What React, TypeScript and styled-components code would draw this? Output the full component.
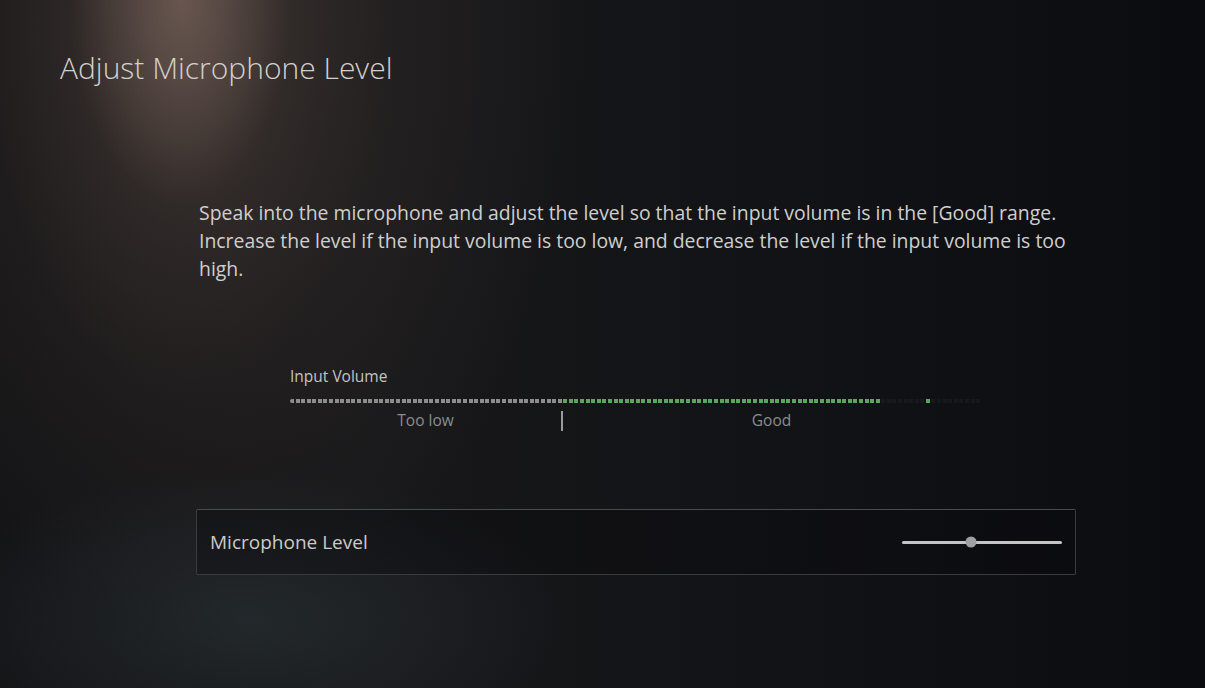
import React from 'react';
import styled, { createGlobalStyle } from 'styled-components';

const GlobalStyle = createGlobalStyle`
  html, body {
    margin: 0;
    padding: 0;
    background: #0e0f12;
  }
  body {
    font-family: "Open Sans", "Noto Sans", sans-serif;
    -webkit-font-smoothing: antialiased;
  }
`

const Screen = styled.div`
  position: relative;
  width: 1205px;
  height: 688px;
  overflow: hidden;
  background:
    radial-gradient(ellipse 110px 200px at 180px 0px, rgba(140, 115, 105, 0.45) 0%, rgba(110, 90, 82, 0) 100%),
    radial-gradient(ellipse 200px 400px at 185px 0px, rgba(105, 86, 78, 0.5) 0%, rgba(80, 66, 60, 0.2) 55%, rgba(60, 50, 48, 0) 100%),
    radial-gradient(ellipse 380px 580px at 200px 40px, rgba(64, 54, 50, 0.55) 0%, rgba(40, 35, 34, 0) 100%),
    radial-gradient(ellipse 320px 150px at 250px 620px, rgba(44, 54, 58, 0.55) 0%, rgba(30, 36, 40, 0) 100%),
    linear-gradient(90deg, #141416 0%, #18181a 30%, #121316 65%, #0b0c10 100%);
  display: flex;
  flex-direction: column;
`

const Title = styled.h1`
  margin: 0;
  padding: 48px 0 0 60px;
  font-size: 30px;
  line-height: 40px;
  font-weight: 300;
  color: #d4d0ce;
`

const Body = styled.div`
  margin: 111px 0 0 196px;
  width: 880px;
  display: flex;
  flex-direction: column;
`

const Instructions = styled.p`
  margin: 0;
  padding-left: 3px;
  font-size: 19.4px;
  line-height: 28px;
  font-weight: 400;
  color: #cfcfcf;
`

const Meter = styled.div`
  margin: 83px 0 0 94px;
  width: 690px;
  display: flex;
  flex-direction: column;
`

const MeterLabel = styled.div`
  font-size: 15.5px;
  color: #c4c4c4;
  line-height: 20px;
`

const DotRow = styled.div`
  margin-top: 12px;
  display: flex;
  gap: 1.58px;
  height: 5px;
  align-items: center;
`

const Dot = styled.span<{ tone: 'grey' | 'green' | 'dark' }>`
  flex: 0 0 4px;
  height: 4px;
  background: ${props =>
    props.tone === 'grey' ? '#8d8d8d' : props.tone === 'green' ? '#5aa65e' : 'rgba(255,255,255,0.035)'};
  &:first-child {
    border-radius: 2px 0 0 2px;
  }
`

const Ranges = styled.div`
  display: flex;
  align-items: flex-start;
  margin-top: 6px;
`

const Range = styled.div<{ width: number }>`
  width: ${props => props.width}px;
  text-align: center;
  font-size: 15.5px;
  color: #8c8c8c;
  line-height: 22px;
`

const Marker = styled.div`
  width: 2px;
  height: 20px;
  background: #9a9a9a;
  margin-top: 2px;
`

const SettingRow = styled.div`
  margin-top: 78px;
  height: 64px;
  border: 1px solid #3a3b3d;
  border-top-color: #4a4b4d;
  border-radius: 2px;
  background: rgba(10, 10, 12, 0.35);
  display: flex;
  align-items: center;
  justify-content: space-between;
  padding: 0 13px 0 13px;
`

const SettingLabel = styled.span`
  font-size: 19px;
  color: #cbcbcb;
`

const Slider = styled.div`
  position: relative;
  width: 160px;
  height: 3px;
  background: #c4c4c4;
  border-radius: 2px;
`

const Thumb = styled.span`
  position: absolute;
  top: 50%;
  width: 11px;
  height: 11px;
  border-radius: 50%;
  background: #a0a0a2;
  transform: translate(-50%, -50%);
`

type Tone = 'grey' | 'green' | 'dark'

function buildDots(): Tone[] {
  const dots: Tone[] = []
  for (let i = 0; i < 124; i++) {
    if (i < 49) dots.push('grey')
    else if (i < 106) dots.push('green')
    else if (i === 114) dots.push('green')
    else dots.push('dark')
  }
  return dots
}

export default function App() {
  const dots = buildDots()
  const level = 0.43

  return (
    <Screen>
      <GlobalStyle />
      <Title>Adjust Microphone Level</Title>
      <Body>
        <Instructions>
          Speak into the microphone and adjust the level so that the input volume is in the [Good] range.
          Increase the level if the input volume is too low, and decrease the level if the input volume is too
          high.
        </Instructions>

        <Meter>
          <MeterLabel>Input Volume</MeterLabel>
          <DotRow>
            {dots.map((tone, i) => <Dot key={i} tone={tone} />)}
          </DotRow>
          <Ranges>
            <Range width={271}>Too low</Range>
            <Marker />
            <Range width={417}>Good</Range>
          </Ranges>
        </Meter>

        <SettingRow>
          <SettingLabel>Microphone Level</SettingLabel>
          <Slider>
            <Thumb style={{ left: `${level * 100}%` }} />
          </Slider>
        </SettingRow>
      </Body>
    </Screen>
  )
}
